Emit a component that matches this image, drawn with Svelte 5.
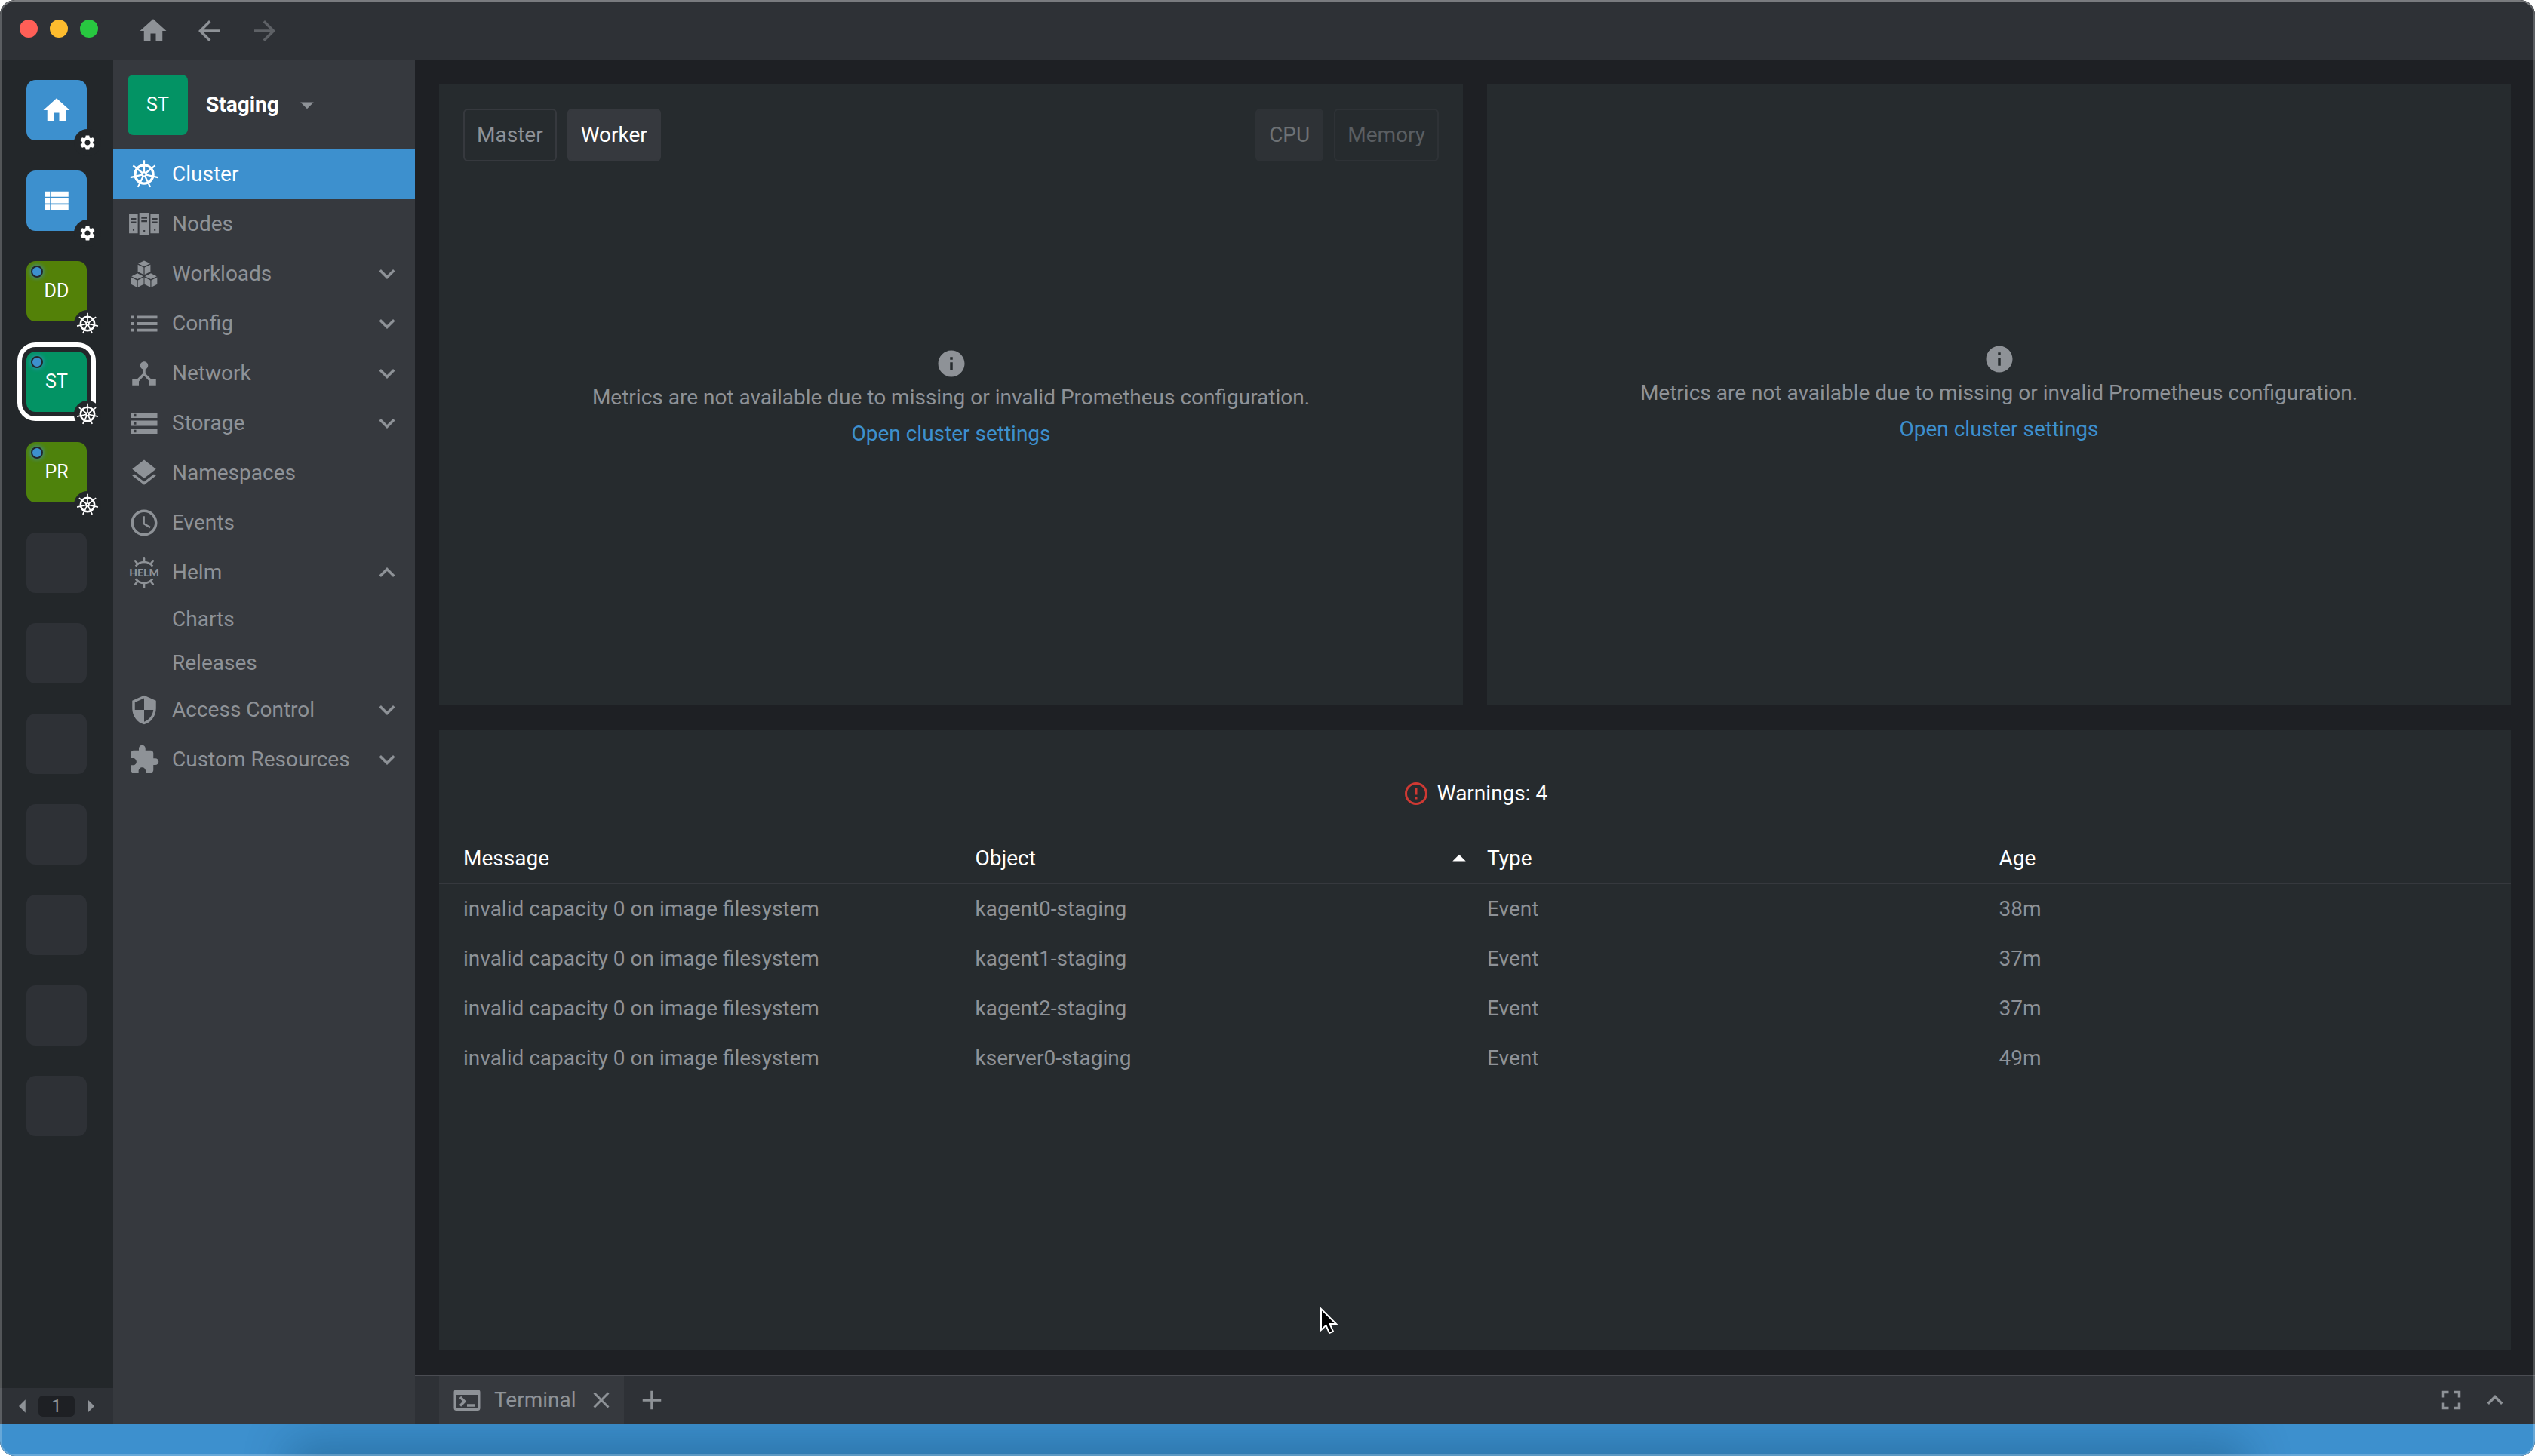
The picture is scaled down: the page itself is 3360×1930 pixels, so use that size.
<script lang="ts">
    type NavItem = {
        id: string;
        label: string;
        expandable?: boolean;
        children?: string[];
    };

    type HotbarItem = {
        kind: "home" | "catalog" | "cluster";
        label: string;
        initials?: string;
        color: string;
    };

    const hotbar: (HotbarItem | null)[] = [
        { kind: "home", label: "Welcome page", color: "blue" },
        { kind: "catalog", label: "Catalog", color: "blue" },
        { kind: "cluster", label: "Development", initials: "DD", color: "olive" },
        { kind: "cluster", label: "Staging", initials: "ST", color: "teal" },
        { kind: "cluster", label: "Production", initials: "PR", color: "green" },
        ...Array(7).fill(null),
    ];

    const nav: NavItem[] = [
        { id: "cluster", label: "Cluster" },
        { id: "nodes", label: "Nodes" },
        { id: "workloads", label: "Workloads", expandable: true },
        { id: "config", label: "Config", expandable: true },
        { id: "network", label: "Network", expandable: true },
        { id: "storage", label: "Storage", expandable: true },
        { id: "namespaces", label: "Namespaces" },
        { id: "events", label: "Events" },
        { id: "helm", label: "Helm", expandable: true, children: ["Charts", "Releases"] },
        { id: "access", label: "Access Control", expandable: true },
        { id: "custom", label: "Custom Resources", expandable: true },
    ];

    const events = [
        { object: "kagent0-staging", age: "38m" },
        { object: "kagent1-staging", age: "37m" },
        { object: "kagent2-staging", age: "37m" },
        { object: "kserver0-staging", age: "49m" },
    ];

    const spokes = [0, 1, 2, 3, 4, 5, 6].map((n) => (n * 360) / 7);
    const helmTicks = [-37, 0, 37, 143, 180, 217];
    const cubes = [[12, 2], [6.9, 11.6], [17.1, 11.6]];

    let selected = $state("Staging");
    let active = $state("cluster");
    let opened = $state<Record<string, boolean>>({ helm: true });
    let role = $state("Worker");

    function select(item: NavItem) {
        if (item.expandable) opened[item.id] = !opened[item.id];
        else active = item.id;
    }
</script>

{#snippet icon(name: string)}
    <svg class="icon" viewBox="0 0 24 24" fill="currentColor" aria-hidden="true">
        {#if name === "home"}
            <path d="M10 20v-6h4v6h5v-8h3L12 3 2 12h3v8z" />
        {:else if name === "back"}
            <path d="M20 11H7.83l5.59-5.59L12 4l-8 8 8 8 1.41-1.41L7.83 13H20v-2z" />
        {:else if name === "forward"}
            <path d="M12 4l-1.41 1.41L16.17 11H4v2h12.17l-5.58 5.59L12 20l8-8z" />
        {:else if name === "catalog"}
            <path d="M3 14h4v-4H3v4zm0 5h4v-4H3v4zM3 9h4V5H3v4zm5 5h13v-4H8v4zm0 5h13v-4H8v4zM8 5v4h13V5H8z" />
        {:else if name === "gear"}
            <path d="M19.14 12.94c.04-.3.06-.61.06-.94 0-.32-.02-.64-.07-.94l2.03-1.58c.18-.14.23-.41.12-.61l-1.92-3.32c-.12-.22-.37-.29-.59-.22l-2.39.96c-.5-.38-1.03-.7-1.62-.94l-.36-2.54c-.04-.24-.24-.41-.48-.41h-3.84c-.24 0-.43.17-.47.41l-.36 2.54c-.59.24-1.13.57-1.62.94l-2.39-.96c-.22-.08-.47 0-.59.22L2.74 8.87c-.12.21-.08.47.12.61l2.03 1.58c-.05.3-.09.63-.09.94s.02.64.07.94l-2.03 1.58c-.18.14-.23.41-.12.61l1.92 3.32c.12.22.37.29.59.22l2.39-.96c.5.38 1.03.7 1.62.94l.36 2.54c.05.24.24.41.48.41h3.84c.24 0 .44-.17.47-.41l.36-2.54c.59-.24 1.13-.56 1.62-.94l2.39.96c.22.08.47 0 .59-.22l1.92-3.32c.12-.22.07-.47-.12-.61l-2.01-1.58zM12 15.6c-1.98 0-3.6-1.62-3.6-3.6s1.62-3.6 3.6-3.6 3.6 1.62 3.6 3.6-1.62 3.6-3.6 3.6z" />
        {:else if name === "cluster"}
            <g fill="none" stroke="currentColor">
                <circle cx="12" cy="12" r="6.9" stroke-width="1.9" />
                <circle cx="12" cy="12" r="1.5" stroke-width="1.3" />
                {#each spokes as angle (angle)}
                    <path d="M12 10.400V1.300" stroke-width="1.300" transform="rotate({angle} 12 12)" />
                {/each}
            </g>
        {:else if name === "nodes"}
            <path
                fill-rule="evenodd"
                d="M.6 4.6h6.6V19H.6zM2 7.4v1.3h4V7.4zm0 2.6v1.3h4V10zm1.4 5.8v1.2h1.2v-1.2zM8.4 3.6h7.4v16.8H8.4zM9.9 6.6v1.3h4.4V6.6zm0 2.5v1.3h4.4V9.1zm1.6 7.5v1.2h1.2v-1.2zM16.8 4.6h6.6V19h-6.6zM18.1 7.4v1.3h4V7.4zm0 2.6v1.3h4V10zm1.4 5.8v1.2h1.2v-1.2z"
            />
        {:else if name === "workloads"}
            {#each cubes as [x, y] (x)}
                <path transform="translate({x} {y})" d="M0 0l4.5 2.2L0 4.4l-4.5-2.2zM-4.8 3l4.45 2.2v5.3L-4.8 8.3zM4.8 3L.35 5.2v5.3L4.8 8.3z" />
            {/each}
        {:else if name === "config"}
            <path d="M2 6h2v2.2H2zm0 4.9h2v2.2H2zm0 4.9h2V18H2zM6.5 6H22v2.2H6.5zm0 4.9H22v2.2H6.5zm0 4.9H22V18H6.5z" />
        {:else if name === "network"}
            <path d="M17 16l-4-4V8.82C14.16 8.4 15 7.3 15 6c0-1.66-1.34-3-3-3S9 4.34 9 6c0 1.3.84 2.4 2 2.82V12l-4 4H3v5h5v-3.05l4-4.2 4 4.2V21h5v-5h-4z" />
        {:else if name === "storage"}
            <path d="M2 20h20v-4H2v4zm2-3h2v2H4v-2zM2 4v4h20V4H2zm4 3H4V5h2v2zm-4 7h20v-4H2v4zm2-3h2v2H4v-2z" />
        {:else if name === "namespaces"}
            <path d="M11.99 18.54l-7.37-5.73L3 14.07l9 7 9-7-1.63-1.27-7.38 5.74zM12 16l7.36-5.73L21 9l-9-7-9 7 1.63 1.27L12 16z" />
        {:else if name === "events"}
            <path d="M11.99 2C6.47 2 2 6.48 2 12s4.47 10 9.99 10C17.52 22 22 17.52 22 12S17.52 2 11.99 2zM12 20c-4.42 0-8-3.58-8-8s3.58-8 8-8 8 3.58 8 8-3.58 8-8 8zm.5-13H11v6l5.25 3.15.75-1.23-4.5-2.67z" />
        {:else if name === "helm"}
            <g fill="none" stroke="currentColor" stroke-width="1.5">
                <path d="M5.6 7.2a8 8 0 0 1 12.8 0M5.6 16.8a8 8 0 0 0 12.8 0" />
                {#each helmTicks as angle (angle)}
                    <path d="M12 4V.8" stroke-linecap="round" transform="rotate({angle} 12 12)" />
                {/each}
            </g>
            <text x="12" y="14.8" text-anchor="middle">HELM</text>
        {:else if name === "access"}
            <path d="M12 1L3 5v6c0 5.55 3.84 10.74 9 12 5.16-1.26 9-6.45 9-12V5l-9-4zm0 10.99h7c-.53 4.12-3.28 7.79-7 8.94V12H5V6.3l7-3.11v8.8z" />
        {:else if name === "custom"}
            <path d="M20.5 11H19V7c0-1.1-.9-2-2-2h-4V3.5C13 2.12 11.88 1 10.5 1S8 2.12 8 3.5V5H4c-1.1 0-1.99.9-1.99 2v3.8H3.5c1.49 0 2.7 1.21 2.7 2.7s-1.21 2.7-2.7 2.7H2V20c0 1.1.9 2 2 2h3.8v-1.5c0-1.49 1.21-2.7 2.7-2.7 1.49 0 2.7 1.21 2.7 2.7V22H17c1.1 0 2-.9 2-2v-4h1.5c1.38 0 2.5-1.12 2.5-2.5S21.88 11 20.5 11z" />
        {:else if name === "down"}
            <path d="M7.41 8.59L12 13.17l4.59-4.58L18 10l-6 6-6-6z" />
        {:else if name === "up"}
            <path d="M7.41 15.41L12 10.83l4.59 4.58L18 14l-6-6-6 6z" />
        {:else if name === "caret"}
            <path d="M7 10l5 5 5-5z" />
        {:else if name === "caret-up"}
            <path d="M7 14l5-5 5 5z" />
        {:else if name === "left"}
            <path d="M15 5v14l-7-7z" />
        {:else if name === "right"}
            <path d="M9 5v14l7-7z" />
        {:else if name === "info"}
            <path d="M12 2C6.48 2 2 6.48 2 12s4.48 10 10 10 10-4.48 10-10S17.52 2 12 2zm1 15h-2v-6h2v6zm0-8h-2V7h2v2z" />
        {:else if name === "warning"}
            <path d="M11 15h2v2h-2zm0-8h2v6h-2zm.99-5C6.47 2 2 6.48 2 12s4.47 10 9.99 10C17.52 22 22 17.52 22 12S17.52 2 11.99 2zM12 20c-4.42 0-8-3.58-8-8s3.58-8 8-8 8 3.58 8 8-3.58 8-8 8z" />
        {:else if name === "terminal"}
            <path fill-rule="evenodd" d="M4 4h16a2 2 0 0 1 2 2v12a2 2 0 0 1-2 2H4a2 2 0 0 1-2-2V6a2 2 0 0 1 2-2zm0 4v10h16V8zM7.5 9l4 4-4 4-1.4-1.4L8.700 13l-2.600-2.600zM12 15h6v2h-6z" />
        {:else if name === "close"}
            <path d="M19 6.41L17.59 5 12 10.59 6.41 5 5 6.41 10.59 12 5 17.59 6.41 19 12 13.41 17.59 19 19 17.59 13.41 12z" />
        {:else if name === "add"}
            <path d="M19 13h-6v6h-2v-6H5v-2h6V5h2v6h6v2z" />
        {:else if name === "fullscreen"}
            <path d="M7 14H5v5h5v-2H7v-3zm-2-4h2V7h3V5H5v5zm12 7h-3v2h5v-5h-2v3zM14 5v2h3v3h2V5h-5z" />
        {/if}
    </svg>
{/snippet}

{#snippet noMetrics()}
    <div class="no-metrics">
        {@render icon("info")}
        <p>Metrics are not available due to missing or invalid Prometheus configuration.</p>
        <a href="#settings">Open cluster settings</a>
    </div>
{/snippet}

<div class="window">
    <header class="topbar">
        <div class="lights">
            <button class="light close" aria-label="Close window"></button>
            <button class="light minimize" aria-label="Minimize window"></button>
            <button class="light zoom" aria-label="Zoom window"></button>
        </div>
        <nav class="history">
            <button aria-label="Home">{@render icon("home")}</button>
            <button aria-label="Back">{@render icon("back")}</button>
            <button aria-label="Forward" disabled>{@render icon("forward")}</button>
        </nav>
    </header>

    <aside class="hotbar">
        <div class="cells">
            {#each hotbar as item, index (index)}
                {#if item}
                    <button
                        class="cell {item.color}"
                        class:selected={item.label === selected}
                        aria-label={item.label}
                        onclick={() => (selected = item.label)}
                    >
                        {#if item.kind === "cluster"}
                            <span>{item.initials}</span>
                            <i class="status"></i>
                        {:else}
                            {@render icon(item.kind)}
                        {/if}
                        <span class="badge {item.kind}">
                            {@render icon(item.kind === "cluster" ? "cluster" : "gear")}
                        </span>
                    </button>
                {:else}
                    <div class="cell empty"></div>
                {/if}
            {/each}
        </div>
        <div class="pager">
            <button aria-label="Previous hotbar">{@render icon("left")}</button>
            <span class="page">1</span>
            <button aria-label="Next hotbar">{@render icon("right")}</button>
        </div>
    </aside>

    <aside class="sidebar">
        <button class="cluster-menu">
            <span class="avatar">ST</span>
            <span class="name">Staging</span>
            {@render icon("caret")}
        </button>
        <nav>
            {#each nav as item (item.id)}
                <button class="nav-item" class:active={active === item.id} onclick={() => select(item)}>
                    {@render icon(item.id)}
                    <span class="label">{item.label}</span>
                    {#if item.expandable}
                        {@render icon(opened[item.id] ? "up" : "down")}
                    {/if}
                </button>
                {#if item.children && opened[item.id]}
                    {#each item.children as child (child)}
                        <a class="sub-item" href="#{child.toLowerCase()}">{child}</a>
                    {/each}
                {/if}
            {/each}
        </nav>
    </aside>

    <main>
        <section class="panel nodes">
            <div class="toolbar">
                <div class="group">
                    {#each ["Master", "Worker"] as name (name)}
                        <button class="toggle" class:on={role === name} onclick={() => (role = name)}>{name}</button>
                    {/each}
                </div>
                <div class="group">
                    <button class="toggle on" disabled>CPU</button>
                    <button class="toggle" disabled>Memory</button>
                </div>
            </div>
            {@render noMetrics()}
        </section>

        <section class="panel">
            {@render noMetrics()}
        </section>

        <section class="panel issues">
            <h2>{@render icon("warning")}Warnings: {events.length}</h2>
            <table>
                <thead>
                    <tr>
                        <th>Message</th>
                        <th class="sorted" aria-sort="ascending">Object {@render icon("caret-up")}</th>
                        <th>Type</th>
                        <th>Age</th>
                    </tr>
                </thead>
                <tbody>
                    {#each events as event (event.object)}
                        <tr>
                            <td>invalid capacity 0 on image filesystem</td>
                            <td>{event.object}</td>
                            <td>Event</td>
                            <td>{event.age}</td>
                        </tr>
                    {/each}
                </tbody>
            </table>
        </section>
    </main>

    <footer class="dock">
        <div class="tab">
            {@render icon("terminal")}
            <span>Terminal</span>
            <button aria-label="Close terminal">{@render icon("close")}</button>
        </div>
        <button class="new-tab" aria-label="New tab">{@render icon("add")}</button>
        <div class="dock-actions">
            <button aria-label="Fullscreen">{@render icon("fullscreen")}</button>
            <button aria-label="Open dock">{@render icon("up")}</button>
        </div>
    </footer>

    <div class="bottombar"></div>

    <svg class="pointer" viewBox="0 0 24 36" aria-hidden="true">
        <path d="M2 2v28l6.5-6 4.5 10 5-2-4.5-10H22z" fill="#000" stroke="#fff" stroke-width="2" />
    </svg>
</div>

<style>
    :global(body) {
        background: #fff;
    }

    .window {
        --text: #8e9297;
        --accent: #3d90ce;
        position: relative;
        display: grid;
        grid-template-columns: 150px 400px minmax(0, 1fr);
        grid-template-rows: 80px minmax(0, 1fr) 66px 42px;
        height: 100vh;
        box-sizing: border-box;
        overflow: hidden;
        border-radius: 20px;
        background: #1e2024;
        color: var(--text);
        font: 28px/40px Roboto, "Liberation Sans", sans-serif;
    }

    /* Thin light edge over the whole window frame. */
    .window::after {
        content: "";
        position: absolute;
        inset: 0;
        border: 2px solid rgba(255, 255, 255, 0.22);
        border-top-color: rgba(255, 255, 255, 0.36);
        border-radius: 20px;
        pointer-events: none;
    }

    button {
        padding: 0;
        border: 0;
        background: none;
        color: inherit;
        font: inherit;
        cursor: pointer;
    }

    a {
        color: inherit;
        text-decoration: none;
    }

    .icon {
        display: block;
        flex: none;
        width: 42px;
        height: 42px;
    }

    .icon text {
        font: 900 8px/1 Lato, sans-serif;
    }

    .topbar {
        grid-column: 1 / -1;
        display: flex;
        align-items: center;
        gap: 52px;
        padding-left: 26px;
        background: #2e3136;
    }

    .lights {
        display: flex;
        gap: 16px;
        padding-bottom: 4px;
    }

    .light {
        width: 24px;
        height: 24px;
        border-radius: 50%;
    }

    .light.close { background: #ff5f57; }
    .light.minimize { background: #febc2e; }
    .light.zoom { background: #28c840; }

    .history {
        display: flex;
        gap: 32px;
        padding-top: 2px;
    }

    .history button:disabled { opacity: 0.5; }

    .hotbar {
        grid-row: 2 / 4;
        display: flex;
        flex-direction: column;
        justify-content: space-between;
        background: #23272a;
    }

    .cells {
        display: flex;
        flex-direction: column;
        align-items: center;
        gap: 40px;
        padding-top: 26px;
    }

    .cell {
        position: relative;
        display: grid;
        place-items: center;
        width: 80px;
        height: 80px;
        border-radius: 12px;
        color: #fff;
        font-size: 25px;
    }

    .cell.blue { background: var(--accent); }
    .cell.olive { background: #538108; }
    .cell.teal { background: #039364; }
    .cell.green { background: #4e820c; }
    .cell.empty { background: #2e3136; }

    .cell.selected {
        box-shadow: 0 0 0 6px #23272a, 0 0 0 12px #fff;
    }

    .status {
        position: absolute;
        top: 6px;
        left: 6px;
        width: 12px;
        height: 12px;
        border: 2px solid #23272a;
        border-radius: 50%;
        background: var(--accent);
        box-shadow: 0 0 6px var(--accent);
    }

    .badge {
        position: absolute;
        right: -19px;
        bottom: -21px;
        display: grid;
        place-items: center;
        width: 36px;
        height: 36px;
        border-radius: 50%;
        background: #23272a;
    }

    .badge .icon {
        width: 24px;
        height: 24px;
    }

    .badge.cluster .icon {
        width: 32px;
        height: 32px;
    }

    .pager {
        display: flex;
        align-items: center;
        justify-content: center;
        gap: 6px;
        height: 48px;
        background: #2e3136;
    }

    .pager .icon {
        width: 30px;
        height: 30px;
    }

    .page {
        width: 48px;
        border-radius: 6px;
        background: #1e2024;
        font-size: 24px;
        line-height: 28px;
        text-align: center;
    }

    .sidebar {
        grid-row: 2 / 4;
        background: #36393e;
    }

    .cluster-menu {
        display: flex;
        align-items: center;
        width: 100%;
        height: 118px;
        padding-left: 19px;
    }

    .avatar {
        width: 80px;
        margin-right: 24px;
        border-radius: 8px;
        background: #039364;
        color: #fff;
        font-size: 25px;
        line-height: 80px;
    }

    .name {
        margin-right: 16px;
        color: #fff;
        font-weight: 700;
    }

    .nav-item {
        display: flex;
        align-items: center;
        gap: 16px;
        width: 100%;
        height: 66px;
        padding: 0 16px 0 20px;
        text-align: left;
    }

    .nav-item.active {
        background: var(--accent);
        color: #fff;
    }

    .label { flex: 1; }

    .sub-item {
        display: block;
        padding-left: 78px;
        line-height: 58px;
    }

    main {
        display: grid;
        grid-template-columns: repeat(2, minmax(0, 1fr));
        grid-template-rows: repeat(2, minmax(0, 1fr));
        gap: 32px;
        padding: 32px;
    }

    .panel {
        display: flex;
        flex-direction: column;
        background: #262b2e;
    }

    .toolbar {
        display: flex;
        justify-content: space-between;
        padding: 32px 32px 0;
    }

    .group {
        display: flex;
        gap: 14px;
    }

    .toggle {
        height: 70px;
        padding: 0 16px;
        border: 2px solid #36393e;
        border-radius: 6px;
    }

    .toggle.on {
        background: #36393e;
        color: #fff;
    }

    .toggle:disabled { opacity: 0.5; }

    .toggle.on:disabled { color: #b4b7ba; }

    .no-metrics {
        display: flex;
        flex: 1;
        flex-direction: column;
        align-items: center;
        justify-content: center;
        padding-bottom: 4px;
    }

    .nodes .no-metrics { padding-bottom: 94px; }

    .no-metrics p { margin: 4px 0 8px; }
    .no-metrics a { color: var(--accent); }

    .issues { grid-column: 1 / -1; }

    h2 {
        display: flex;
        align-items: center;
        justify-content: center;
        gap: 10px;
        margin: 65px 0 34px;
        color: #fff;
        font-size: 28px;
        font-weight: 400;
    }

    h2 .icon {
        width: 36px;
        height: 36px;
        color: #ce3933;
    }

    table,
    thead,
    tbody {
        display: block;
    }

    tr {
        display: grid;
        grid-template-columns: repeat(4, minmax(0, 1fr));
        align-items: center;
        height: 66px;
        box-sizing: border-box;
        padding-left: 32px;
    }

    thead tr { border-bottom: 2px solid #36393e; }

    th,
    td {
        padding: 0;
        text-align: left;
    }

    th {
        color: #fff;
        font-weight: 400;
    }

    .sorted {
        display: flex;
        align-items: center;
        justify-content: space-between;
        padding-right: 16px;
    }

    .dock {
        display: flex;
        align-items: center;
        padding-left: 32px;
        border-top: 2px solid #4a4c52;
        background: #2e3136;
    }

    .tab {
        display: flex;
        align-items: center;
        align-self: stretch;
        gap: 15px;
        padding: 0 12px 0 16px;
        background: #36393e;
    }

    .tab button .icon {
        width: 36px;
        height: 36px;
    }

    .new-tab { margin-left: 16px; }

    .dock-actions {
        display: flex;
        gap: 16px;
        margin-left: auto;
        padding-right: 32px;
    }

    .bottombar {
        position: relative;
        grid-column: 1 / -1;
        overflow: hidden;
        background: var(--accent);
    }

    .bottombar::after {
        content: "";
        position: absolute;
        top: 100%;
        right: 12%;
        left: 12%;
        height: 40px;
        box-shadow: 0 0 60px 20px rgba(0, 50, 80, 0.3);
    }

    .pointer {
        position: absolute;
        top: 1733px;
        left: 1749px;
        width: 24px;
        height: 36px;
    }
</style>
